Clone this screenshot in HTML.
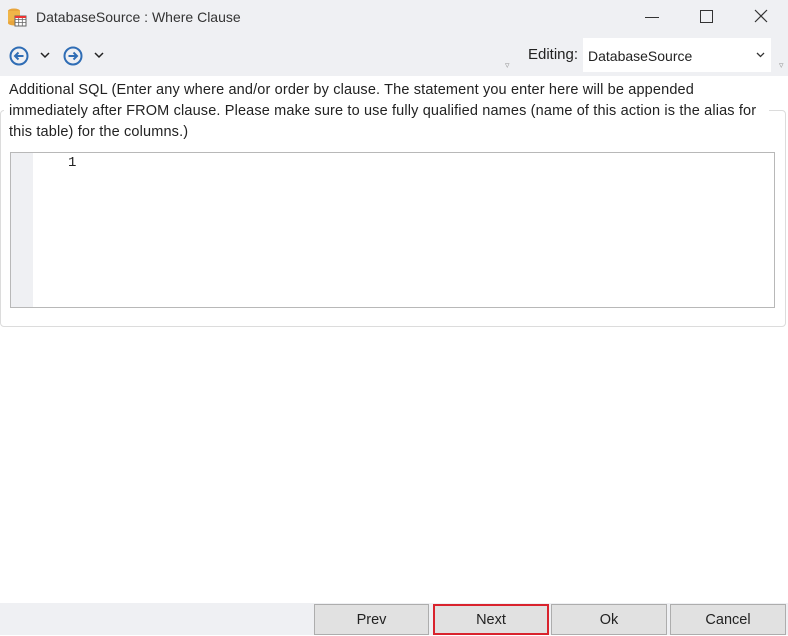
<!DOCTYPE html><html><head><style>
body{margin:0;width:788px;height:635px;background:#fff;font-family:"Liberation Sans",sans-serif;position:relative;overflow:hidden;color:#222}
.a{position:absolute}
</style></head><body>
<div class="a" style="left:0;top:0;width:788px;height:76px;background:#eff0f3"></div>
<svg class="a" style="left:7px;top:7px" width="20" height="20" viewBox="0 0 20 20"><ellipse cx="7" cy="4" rx="6" ry="2.5" fill="#e8a53c"/><rect x="1" y="4" width="12" height="12" fill="#f0b548"/><ellipse cx="7" cy="16" rx="6" ry="2.5" fill="#e8a53c"/><rect x="8" y="9" width="11" height="10" fill="#fff" stroke="#666" stroke-width="1"/><path d="M8 12.5h11M8 15.5h11M11.7 9v10M15.3 9v10" stroke="#666" stroke-width="0.8"/><rect x="8" y="9" width="11" height="2" fill="#e33"/></svg>
<div class="a" style="left:36px;top:9px;font-size:14px;color:#333">DatabaseSource : Where Clause</div>
<div class="a" style="left:645px;top:17px;width:14px;height:1px;background:#333"></div>
<div class="a" style="left:700px;top:10px;width:11px;height:11px;border:1px solid #333"></div>
<svg class="a" style="left:754px;top:9px" width="14" height="14"><path d="M1 1L13 13M13 1L1 13" stroke="#333" stroke-width="1.2"/></svg>
<svg class="a" style="left:8px;top:45px" width="22" height="22"><circle cx="11" cy="11" r="8.5" fill="none" stroke="#2f6db5" stroke-width="2"/><path d="M15.5 11H7M10.5 7.5L7 11l3.5 3.5" fill="none" stroke="#2f6db5" stroke-width="2"/></svg>
<svg class="a" style="left:40px;top:51px" width="10" height="8"><path d="M1 2l4 4 4-4" fill="none" stroke="#222" stroke-width="1.5"/></svg>
<svg class="a" style="left:62px;top:45px" width="22" height="22"><circle cx="11" cy="11" r="8.5" fill="none" stroke="#2f6db5" stroke-width="2"/><path d="M6.5 11H15M11.5 7.5L15 11l-3.5 3.5" fill="none" stroke="#2f6db5" stroke-width="2"/></svg>
<svg class="a" style="left:94px;top:51px" width="10" height="8"><path d="M1 2l4 4 4-4" fill="none" stroke="#222" stroke-width="1.5"/></svg>
<div class="a" style="left:505px;top:60px;font-size:9px;color:#999">▿</div>
<div class="a" style="left:528px;top:46px;font-size:15px;color:#222">Editing:</div>
<div class="a" style="left:583px;top:38px;width:188px;height:34px;background:#fff"></div>
<div class="a" style="left:588px;top:48px;font-size:14px;color:#222">DatabaseSource</div>
<svg class="a" style="left:756px;top:52px" width="9" height="6"><path d="M1 1l3.5 3.5L8 1" fill="none" stroke="#333" stroke-width="1.3"/></svg>
<div class="a" style="left:779px;top:60px;font-size:9px;color:#999">▿</div>
<div class="a" style="left:0;top:110px;width:784px;height:215px;border:1px solid #dcdcdc;border-radius:4px"></div>
<div class="a" style="left:4px;top:80px;width:760px;background:#fff;font-size:14.5px;line-height:21px;padding-left:5px;color:#222;white-space:nowrap;letter-spacing:0.15px">Additional SQL (Enter any where and/or order by clause. The statement you enter here will be appended<br>immediately after FROM clause. Please make sure to use fully qualified names (name of this action is the alias for<br>this table) for the columns.)</div>
<div class="a" style="left:10px;top:152px;width:763px;height:154px;border:1px solid #b8b8b8;background:#fff"></div>
<div class="a" style="left:11px;top:153px;width:22px;height:154px;background:#eff0f3"></div>
<div class="a" style="left:68px;top:155px;font-size:14px;font-family:'Liberation Mono',monospace">1</div>
<div class="a" style="left:0;top:603px;width:788px;height:32px;background:#eff0f3"></div>
<div class="a" style="left:314px;top:604px;width:115px;height:31px;background:#e1e1e1;border:1px solid #adadad;box-sizing:border-box;text-align:center;font-size:14.5px;line-height:31px">Prev</div>
<div class="a" style="left:433px;top:604px;width:116px;height:31px;background:#e1e1e1;border:2px solid #d9232d;box-sizing:border-box;text-align:center;font-size:14.5px;line-height:28px">Next</div>
<div class="a" style="left:551px;top:604px;width:116px;height:31px;background:#e1e1e1;border:1px solid #adadad;box-sizing:border-box;text-align:center;font-size:14.5px;line-height:31px">Ok</div>
<div class="a" style="left:670px;top:604px;width:116px;height:31px;background:#e1e1e1;border:1px solid #adadad;box-sizing:border-box;text-align:center;font-size:14.5px;line-height:31px">Cancel</div>
</body></html>
